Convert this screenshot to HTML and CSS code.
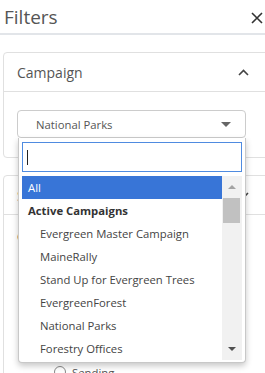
FILE: index.html
```html
<!DOCTYPE html>
<html lang="en">
<head>
    <meta charset="UTF-8">
    <meta name="viewport" content="width=device-width, initial-scale=1.0">
    <title>Filters</title>
    <link rel="stylesheet" href="styles.css">
</head>
<body>
    <div class="header">
        <h1 class="title">Filters</h1>
        <span class="close">
            <svg width="12" height="12" viewBox="0 0 12 12"><path d="M1 1 L11 11 M11 1 L1 11" stroke="#333" stroke-width="1.6" fill="none"/></svg>
        </span>
    </div>

    <div class="filters">
        <section class="card">
            <div class="card-head">
                <span>Campaign</span>
                <svg class="chevron" width="11" height="7" viewBox="0 0 11 7"><path d="M1 6 L5.5 1.5 L10 6" stroke="#444" stroke-width="1.6" fill="none"/></svg>
            </div>
            <div class="card-body">
                <div class="select">
                    <div class="select-box">
                        <span>National Parks</span>
                        <span class="caret"></span>
                    </div>

                    <!-- open dropdown -->
                    <div class="dropdown">
                        <div class="search"><span class="cursor"></span></div>
                        <div class="results">
                            <ul class="options">
                                <li class="option highlighted">All</li>
                                <li class="group">Active Campaigns</li>
                                <li class="option child">Evergreen Master Campaign</li>
                                <li class="option child">MaineRally</li>
                                <li class="option child">Stand Up for Evergreen Trees</li>
                                <li class="option child">EvergreenForest</li>
                                <li class="option child">National Parks</li>
                                <li class="option child">Forestry Offices</li>
                                <li class="option child">Coastal Cleanup</li>
                            </ul>
                            <div class="scrollbar">
                                <span class="arrow up"></span>
                                <div class="track"><div class="thumb"></div></div>
                                <span class="arrow down"></span>
                            </div>
                        </div>
                    </div>
                </div>
            </div>
        </section>

        <section class="card">
            <div class="card-head">
                <span>Status</span>
                <svg class="chevron" width="11" height="7" viewBox="0 0 11 7"><path d="M1 1 L5.5 5.5 L10 1" stroke="#444" stroke-width="1.6" fill="none"/></svg>
            </div>
            <div class="card-body status">
                <div class="label">Campaign status</div>
                <label class="radio"><span class="dot"></span>All</label>
                <label class="radio"><span class="dot"></span>Draft</label>
                <label class="radio"><span class="dot"></span>Scheduled</label>
                <label class="radio"><span class="dot"></span>Paused</label>
                <label class="radio"><span class="dot"></span>Sending</label>
            </div>
        </section>
    </div>
</body>
</html>
```

FILE: styles.css
```css
html, body {
    overflow: hidden;
}

body {
    margin: 0;
    font-family: "Open Sans", Arial, sans-serif;
    color: #444;
    background: #fff;
}

.header {
    height: 33px;
    display: flex;
    align-items: center;
    justify-content: space-between;
    padding: 0 2px 0 4px;
    border-bottom: 2px solid #e2e5e9;
}

.title {
    margin: 0;
    font-size: 19px;
    font-weight: 400;
    color: #555;
}

.close {
    display: flex;
    margin-top: 2px;
}

.filters {
    padding: 17px 0 0 3px;
    width: 300px;
}

.card {
    border: 1px solid #e0e0e0;
    border-radius: 4px;
    margin-bottom: 17px;
}

.card-head {
    height: 38px;
    display: flex;
    align-items: center;
    justify-content: space-between;
    padding: 0 53px 0 13px;
    border-bottom: 1px solid #e0e0e0;
    font-size: 14px;
    color: #555;
}

.card-body {
    padding: 18px 0 19px 13px;
}

.select {
    position: relative;
    width: 229px;
    font-size: 11.3px;
}

.select-box {
    box-sizing: border-box;
    height: 28px;
    border: 1px solid #ccc;
    border-radius: 4px;
    display: flex;
    align-items: center;
    justify-content: space-between;
    padding: 0 14px 0 18px;
    color: #555;
}

.caret {
    width: 0;
    height: 0;
    border-left: 5px solid transparent;
    border-right: 5px solid transparent;
    border-top: 5px solid #666;
}

.dropdown {
    position: absolute;
    top: 100%;
    left: 1px;
    width: 228px;
    box-sizing: border-box;
    background: #fff;
    border: 1px solid #c8c8c8;
    border-top: none;
    border-radius: 0 0 4px 4px;
    padding: 4px 3px 2px;
    box-shadow: 0 3px 6px rgba(0, 0, 0, 0.22);
    z-index: 2;
}

.search {
    box-sizing: border-box;
    height: 30px;
    border: 1px solid #4f8be0;
    display: flex;
    align-items: center;
    padding-left: 4px;
}

.cursor {
    width: 1px;
    height: 15px;
    background: #222;
}

.results {
    display: flex;
    height: 184px;
    margin-top: 4px;
    overflow: hidden;
}

.options {
    flex: 1;
    list-style: none;
    margin: 0;
    padding: 0;
}

.options li {
    height: 23px;
    line-height: 23px;
    padding-left: 6px;
    white-space: nowrap;
}

.options .child {
    padding-left: 18px;
}

.options .group {
    font-weight: 700;
    color: #333;
}

.options .highlighted {
    background: #3875d7;
    color: #fff;
}

.scrollbar {
    width: 20px;
    background: #f1f1f1;
    display: flex;
    flex-direction: column;
    align-items: center;
}

.arrow {
    width: 0;
    height: 0;
    border-left: 4px solid transparent;
    border-right: 4px solid transparent;
    margin: 9px 0;
}

.arrow.up {
    border-bottom: 4px solid #a3a3a3;
}

.arrow.down {
    border-top: 4px solid #505050;
}

.track {
    flex: 1;
    width: 100%;
    padding: 0 2px 0 1px;
    box-sizing: border-box;
}

.thumb {
    height: 25px;
    background: #c1c1c1;
}

.status {
    padding: 14px 0 0 13px;
    font-size: 11.3px;
}

.label {
    height: 20px;
    margin-bottom: 6px;
}

.radio {
    display: flex;
    align-items: center;
    height: 26px;
    padding-left: 37px;
    color: #555;
}

.dot {
    width: 10px;
    height: 10px;
    border: 1px solid #888;
    border-radius: 50%;
    margin-right: 6px;
}
```
